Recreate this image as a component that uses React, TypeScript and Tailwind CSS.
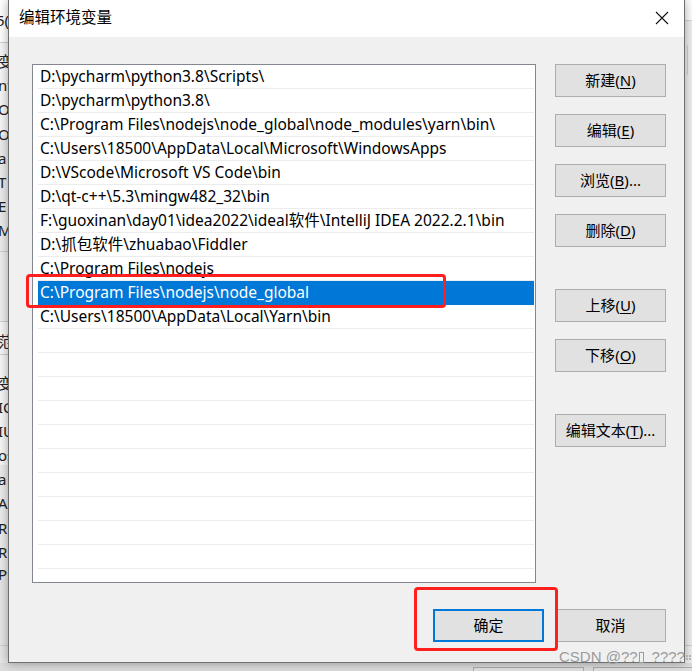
import React from "react";

const rows = [
  "D:\\pycharm\\python3.8\\Scripts\\",
  "D:\\pycharm\\python3.8\\",
  "C:\\Program Files\\nodejs\\node_global\\node_modules\\yarn\\bin\\",
  "C:\\Users\\18500\\AppData\\Local\\Microsoft\\WindowsApps",
  "D:\\VScode\\Microsoft VS Code\\bin",
  "D:\\qt-c++\\5.3\\mingw482_32\\bin",
  "F:\\guoxinan\\day01\\idea2022\\ideal软件\\IntelliJ IDEA 2022.2.1\\bin",
  "D:\\抓包软件\\zhuabao\\Fiddler",
  "C:\\Program Files\\nodejs",
  "C:\\Program Files\\nodejs\\node_global",
  "C:\\Users\\18500\\AppData\\Local\\Yarn\\bin",
  "", "", "", "", "", "", "", "", "", "", "",
];

const FONT = {
  fontFamily:
    '"Segoe UI", "Noto Sans", "Noto Sans CJK SC", sans-serif',
};

function Btn({
  label,
  u,
  suffix = "",
  className = "",
}: {
  label: string;
  u?: string;
  suffix?: string;
  className?: string;
}) {
  return (
    <div
      className={`h-[33px] w-[111px] bg-[#e1e1e1] border border-[#adadad] flex items-center justify-center text-[15px] text-black ${className}`}
    >
      <span>
        {label}
        {u ? (
          <>
            (<span className="underline underline-offset-2">{u}</span>)
          </>
        ) : null}
        {suffix}
      </span>
    </div>
  );
}

const leftTop = [
  { y: 51, t: "变" },
  { y: 75, t: "nt" },
  { y: 99, t: "Or" },
  { y: 124, t: "Or" },
  { y: 148, t: "a" },
  { y: 172, t: "T" },
  { y: 196, t: "E" },
  { y: 220, t: "M" },
  { y: 331, t: "范" },
  { y: 373, t: "变" },
  { y: 397, t: "IC" },
  { y: 421, t: "IU" },
  { y: 445, t: "os" },
  { y: 469, t: "a" },
  { y: 493, t: "A" },
  { y: 518, t: "R" },
  { y: 542, t: "R" },
  { y: 564, t: "P" },
];

export default function App() {
  return (
    <div
      className="relative w-[692px] h-[671px] overflow-hidden bg-[#f0f0f0]"
      style={FONT}
    >
      {/* background window, left edge */}
      <div className="absolute left-0 top-0 w-[10px] h-[671px] bg-[#f7f7f7] overflow-hidden text-[15px] text-[#222]">
        <div className="absolute left-0 top-0 w-full h-[43px] bg-white border-b border-[#cfcfcf]" />
        <div className="absolute left-0 top-[135px] w-full h-[116px] bg-[#ececec]" />
        <div className="absolute left-0 top-[251px] w-full h-[71px] bg-[#eeeeee] border-y border-[#cfcfcf]" />
        <div className="absolute left-0 top-[354px] w-full h-[1px] bg-[#cfcfcf]" />
        <div className="absolute left-0 top-[465px] w-full h-[107px] bg-[#ececec]" />
        <div className="absolute left-0 top-[572px] w-full h-[99px] bg-[#e6e6e6] border-t border-[#cfcfcf]" />
        <div className="absolute left-0 top-[645px] w-full h-[1px] bg-[#cfcfcf]" />
        <span className="absolute left-[-4px] top-[10px] leading-[20px]">5(</span>
        {leftTop.map((r, i) => (
          <span key={i} className="absolute left-[-2px] leading-[20px]" style={{ top: r.y }}>
            {r.t}
          </span>
        ))}
      </div>

      {/* background window, right edge */}
      <div className="absolute right-0 top-0 w-[8px] h-[671px] bg-[#f0f0f0]">
        <div className="h-[21px] bg-white border-b border-[#d6d6d6]" />
        <div className="ml-[3px] mt-[24px] w-[1px] h-[30px] bg-[#d0d0d0]" />
        <div className="mt-[570px] h-[1px] bg-[#d0d0d0]" />
      </div>

      {/* background bottom strip */}
      <div className="absolute left-0 top-[663px] w-[692px] h-[8px] bg-[#dcdcdc]">
        <div className="absolute left-[473px] top-[4px] w-[111px] h-[10px] border border-[#adadad] bg-[#e1e1e1]" />
        <div className="absolute left-[593px] top-[4px] w-[111px] h-[10px] border border-[#adadad] bg-[#e1e1e1]" />
      </div>

      {/* dialog */}
      <div className="absolute left-[8px] top-0 w-[677px] h-[663px] border border-t-0 border-[#6f6f6f] bg-[#f0f0f0] flex flex-col shadow-[0_0_10px_rgba(0,0,0,0.35)]">
        {/* title bar */}
        <div className="h-[37px] bg-white flex items-center justify-between pl-[10px] pr-[14px]">
          <span className="text-[15.5px] text-black -mt-[2px]">编辑环境变量</span>
          <svg width="14" height="14" viewBox="0 0 14 14" className="-mt-[2px] mr-[1px]">
            <path d="M1 1 L13 13 M13 1 L1 13" stroke="#111" strokeWidth="1.1" />
          </svg>
        </div>

        {/* body */}
        <div className="flex flex-col pt-[27px] pl-[23px] pr-[18px]">
          <div className="flex gap-[19px]">
            {/* list */}
            <div className="w-[504px] h-[519px] border border-[#828790] bg-white overflow-hidden flex flex-col pl-[5px] pr-[1px]">
              {rows.map((r, i) => {
                const sel = i === 9;
                return (
                  <div
                    key={i}
                    className={`h-[24px] shrink-0 flex items-center pl-[2px] text-[15.5px] whitespace-nowrap border-b ${
                      sel
                        ? "bg-[#0078d7] text-white border-[#0078d7]"
                        : "text-black border-[#ececec]"
                    }`}
                  >
                    {r}
                  </div>
                );
              })}
            </div>

            {/* buttons */}
            <div className="flex flex-col">
              <Btn label="新建" u="N" />
              <Btn label="编辑" u="E" className="mt-[17px]" />
              <Btn label="浏览" u="B" suffix="..." className="mt-[17px]" />
              <Btn label="删除" u="D" className="mt-[17px]" />
              <Btn label="上移" u="U" className="mt-[42px]" />
              <Btn label="下移" u="O" className="mt-[17px]" />
              <Btn label="编辑文本" u="T" suffix="..." className="mt-[42px]" />
            </div>
          </div>

          {/* bottom buttons */}
          <div className="flex justify-end gap-[11px] mt-[26px]">
            <div className="h-[33px] w-[111px] bg-[#e1e1e1] border-2 border-[#0078d7] flex items-center justify-center text-[15px] text-black">
              确定
            </div>
            <Btn label="取消" />
          </div>
        </div>
      </div>

      {/* red annotation boxes */}
      <div className="absolute left-[26px] top-[274px] w-[420px] h-[34px] border-[3px] border-[#ff1f1f] rounded-[4px]" />
      <div className="absolute left-[414px] top-[587px] w-[144px] h-[64px] border-[3px] border-[#ff1f1f] rounded-[4px]" />

      {/* watermark */}
      <div
        className="absolute left-[559px] top-[648px] text-[15px] leading-[18px] text-[#9c9c9c] whitespace-nowrap flex items-center"
        style={{ fontFamily: '"Liberation Sans", Arial, sans-serif' }}
      >
        <span>CSDN @??</span>
        <span className="inline-block w-[5px] h-[11px] border border-[#9c9c9c] ml-[1px] mr-[8px]" />
        <span>????</span>
        <span className="ml-[1px] grid grid-cols-2 gap-[1px]">
          <span className="w-[2px] h-[2px] bg-[#b0b0b0]" />
          <span className="w-[2px] h-[2px] bg-[#b0b0b0]" />
          <span className="w-[2px] h-[2px] bg-[#b0b0b0]" />
          <span className="w-[2px] h-[2px] bg-[#b0b0b0]" />
        </span>
      </div>
    </div>
  );
}
